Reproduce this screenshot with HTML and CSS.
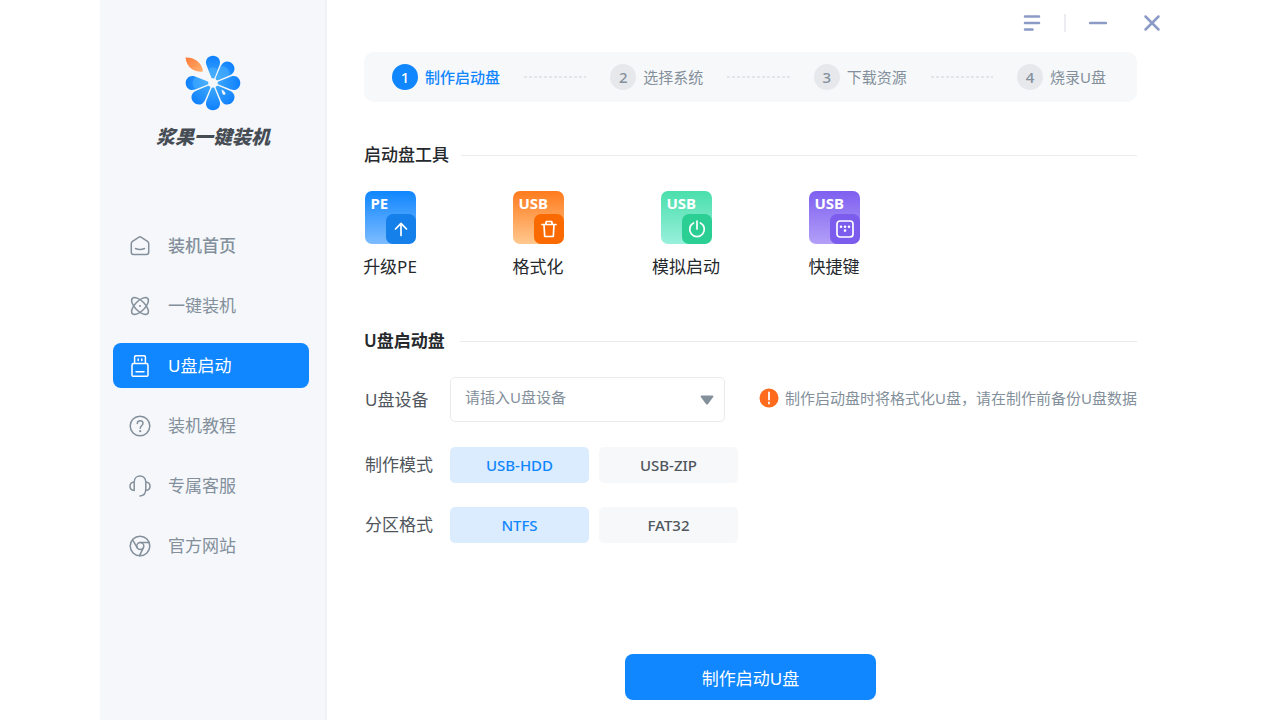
FILE: index.html
```html
<!DOCTYPE html>
<html lang="zh-CN">
<head>
<meta charset="utf-8">
<meta name="viewport" content="width=device-width, initial-scale=1">
<title>浆果一键装机</title>
<link rel="stylesheet" href="styles.css">
</head>
<body>
<div class="window">
  <aside class="sidebar">
    <div class="brand">
      <svg class="brand-logo" viewBox="-28 -28 56 56" aria-hidden="true">
        <defs>
          <linearGradient id="petal-fill" x1="0" y1="0" x2="0" y2="1">
            <stop offset="0" stop-color="#0f80ff"/><stop offset="1" stop-color="#3ba6fb"/>
          </linearGradient>
          <linearGradient id="leaf-fill" x1="0" y1="0" x2="1" y2="1">
            <stop offset="0" stop-color="#ff7a38"/><stop offset="1" stop-color="#ffb070"/>
          </linearGradient>
          <path id="petal" d="M-1.600 -5.500L-6.600 -18C-8.400 -23.500 -4.500 -27.300 0 -27.300S8.400 -23.500 6.600 -18L1.600 -5.500C1.200 -4.300 -1.200 -4.300 -1.600 -5.500Z"/>
        </defs>
        <g fill="url(#petal-fill)">
          <use href="#petal"/>
          <use href="#petal" transform="rotate(45)"/>
          <use href="#petal" transform="rotate(90)"/>
          <use href="#petal" transform="rotate(135)"/>
          <use href="#petal" transform="rotate(180)"/>
          <use href="#petal" transform="rotate(225)"/>
          <use href="#petal" transform="rotate(270)"/>
        </g>
        <g fill="#5cc0ff" opacity=".4">
          <path d="M-1.600 -5.500L-4.600 -13C-4 -16.500 4 -16.500 4.600 -13L1.600 -5.500Z"/>
          <path transform="rotate(45)" d="M-1.600 -5.500L-6 -17C-4 -21.500 4 -21.500 6 -17L1.600 -5.500Z"/>
          <path transform="rotate(270)" d="M-1.600 -5.500L-6 -17C-4 -21.500 4 -21.500 6 -17L1.600 -5.500Z"/>
          <path transform="rotate(270)" d="M-1.600 -5.500L-4.200 -12C-4 -15.500 4 -15.500 4.200 -12L1.600 -5.500Z"/>
        </g>
        <path d="M8.500 6.500Q12.500 8.500 12.500 11Q11.500 12.500 9.800 11.300Q8.800 10 8.500 6.500Z" fill="#f5f7fb"/>
        <path d="M-27.500 -25.500C-20 -26 -11 -21.500 -10 -11.500C-18 -10.500 -26.500 -15 -27.500 -25.500Z" fill="url(#leaf-fill)"/>
      </svg>
      <h1 class="brand-name">浆果一键装机</h1>
    </div>
    <nav class="nav" aria-label="主导航">
      <a class="nav-item nav-item-strong" href="#home">
        <svg class="nav-icon" viewBox="0 0 22 22"><path d="M2.300 8.600Q2.300 7.200 3.500 6.400L9.600 2.300Q11 1.400 12.400 2.300L18.500 6.400Q19.700 7.200 19.700 8.600V17.200Q19.700 19.400 17.500 19.400H4.500Q2.300 19.400 2.300 17.200ZM6.500 13.500Q11 15.600 15.500 13.500"/></svg>
        <span>装机首页</span>
      </a>
      <a class="nav-item" href="#install">
        <svg class="nav-icon" viewBox="0 0 22 22"><ellipse cx="11" cy="11" rx="10.800" ry="5" transform="rotate(45 11 11)"/><ellipse cx="11" cy="11" rx="10.800" ry="5" transform="rotate(-45 11 11)"/><circle class="nav-icon-dot" cx="11" cy="11" r="1"/></svg>
        <span>一键装机</span>
      </a>
      <a class="nav-item nav-item-active" href="#usb" aria-current="page">
        <svg class="nav-icon" viewBox="0 0 22 22"><path d="M5.600 8.500V2Q5.600 .7 6.900 .7H15.100Q16.400 .7 16.400 2V8.500M4.700 8.500H17.300Q19 8.500 19 10.200V20Q19 21.300 17.700 21.300H4.300Q3 21.300 3 20V10.200Q3 8.500 4.700 8.500ZM7 16.800H15M9.200 4V5.500M12.800 4V5.500"/></svg>
        <span>U盘启动</span>
      </a>
      <a class="nav-item" href="#guide">
        <svg class="nav-icon" viewBox="0 0 22 22"><circle cx="11" cy="11" r="9.800"/><path d="M8.300 8.500C8.300 4.800 14 4.900 14 8.300C14 10.700 11.200 10.700 11.200 13.200"/><circle class="nav-icon-dot" cx="11.200" cy="16.200" r="1.100"/></svg>
        <span>装机教程</span>
      </a>
      <a class="nav-item" href="#service">
        <svg class="nav-icon" viewBox="0 0 22 22"><path d="M5.200 15.500V7C5.200 -.9 16.800 -.9 16.800 7V14Q16.800 20.600 11 21M5.200 7Q1 7.500 1 11.200T5.200 15.500M16.800 7Q21 7.500 21 11.200T16.800 15.500"/></svg>
        <span>专属客服</span>
      </a>
      <a class="nav-item" href="#website">
        <svg class="nav-icon" viewBox="0 0 22 22"><circle cx="11" cy="11" r="9.800"/><circle cx="11.300" cy="11" r="3.500"/><path d="M11.300 7.500H20M3.600 4.800L8.300 12.800M14.300 12.800L10.500 20.700"/></svg>
        <span>官方网站</span>
      </a>
    </nav>
  </aside>

  <main class="main">
    <div class="titlebar">
      <button class="icon-button" type="button" aria-label="菜单"><svg width="18" height="18" viewBox="0 0 18 18"><path d="M2 2.500H16M2 9H16M2 15.500H9.500"/></svg></button>
      <span class="titlebar-divider"></span>
      <button class="icon-button" type="button" aria-label="最小化"><svg width="18" height="18" viewBox="0 0 18 18"><path d="M1 9H17"/></svg></button>
      <button class="icon-button icon-button-close" type="button" aria-label="关闭"><svg width="18" height="18" viewBox="0 0 18 18"><path d="M2.500 2.500L15.500 15.500M15.500 2.500L2.500 15.500"/></svg></button>
    </div>

    <ol class="steps">
      <li class="step step-active" aria-current="step"><span class="step-number">1</span><span>制作启动盘</span></li>
      <li class="step-line" aria-hidden="true"></li>
      <li class="step"><span class="step-number">2</span><span>选择系统</span></li>
      <li class="step-line" aria-hidden="true"></li>
      <li class="step"><span class="step-number">3</span><span>下载资源</span></li>
      <li class="step-line" aria-hidden="true"></li>
      <li class="step"><span class="step-number">4</span><span>烧录U盘</span></li>
    </ol>

    <section class="tools-section">
      <h2 class="section-title">启动盘工具</h2>
      <div class="tools">
        <button class="tool" type="button">
          <span class="tool-tile tool-blue"><span class="tool-tag">PE</span><span class="tool-badge"><svg viewBox="0 0 20 20"><path d="M10 16.500V4.500M4.500 10L10 4.300L15.500 10"/></svg></span></span>
          <span class="tool-label">升级PE</span>
        </button>
        <button class="tool" type="button">
          <span class="tool-tile tool-orange"><span class="tool-tag">USB</span><span class="tool-badge"><svg viewBox="0 0 20 20"><path d="M3 5.500H17M6.700 5.500L7.300 2.500H12.700L13.300 5.500M5 5.500L5.700 17.500H14.300L15 5.500"/></svg></span></span>
          <span class="tool-label">格式化</span>
        </button>
        <button class="tool" type="button">
          <span class="tool-tile tool-green"><span class="tool-tag">USB</span><span class="tool-badge"><svg viewBox="0 0 20 20"><path d="M10 2V10M6.500 4A7.300 7.300 0 1 0 13.500 4"/></svg></span></span>
          <span class="tool-label">模拟启动</span>
        </button>
        <button class="tool" type="button">
          <span class="tool-tile tool-purple"><span class="tool-tag">USB</span><span class="tool-badge"><svg viewBox="0 0 20 20"><rect x="2" y="2" width="16" height="16" rx="3"/><g fill="#fff" stroke="none"><circle cx="6" cy="7.800" r="1.300"/><circle cx="10" cy="7.800" r="1.300"/><circle cx="14" cy="7.800" r="1.300"/><circle cx="10" cy="11.600" r="1.300"/></g></svg></span></span>
          <span class="tool-label">快捷键</span>
        </button>
      </div>
    </section>

    <form class="usb-form">
      <h2 class="section-title section-title-wide">U盘启动盘</h2>
      <div class="field field-device">
        <label class="field-label" for="device">U盘设备</label>
        <div class="select-wrap">
          <select class="select" id="device" name="device"><option>请插入U盘设备</option></select>
          <svg class="select-arrow" viewBox="0 0 14 10" aria-hidden="true"><path d="M1.500 .5H12.500Q14 .7 13.200 2L8 9Q7 10 6 9L.8 2Q0 .7 1.500 .5Z"/></svg>
        </div>
        <p class="notice">
          <svg class="notice-icon" viewBox="0 0 20 20" aria-hidden="true"><circle cx="10" cy="10" r="9.500" fill="#ff6b1c"/><path d="M10 4.500V11.500M10 14.300V15.500" stroke="#fff" stroke-width="1.800" stroke-linecap="round"/></svg>
          <span>制作启动盘时将格式化U盘，请在制作前备份U盘数据</span>
        </p>
      </div>
      <div class="field field-mode" role="radiogroup" aria-labelledby="mode-label">
        <span class="field-label" id="mode-label">制作模式</span>
        <div class="options">
          <label class="option"><input type="radio" name="mode" checked><span>USB-HDD</span></label>
          <label class="option"><input type="radio" name="mode"><span>USB-ZIP</span></label>
        </div>
      </div>
      <div class="field" role="radiogroup" aria-labelledby="format-label">
        <span class="field-label" id="format-label">分区格式</span>
        <div class="options">
          <label class="option"><input type="radio" name="format" checked><span>NTFS</span></label>
          <label class="option"><input type="radio" name="format"><span>FAT32</span></label>
        </div>
      </div>
      <button class="primary" type="button">制作启动U盘</button>
    </form>
  </main>
</div>
</body>
</html>
```
FILE: styles.css
```css
* { box-sizing: border-box; }

body {
  margin: 0;
  background: #fff;
  color: #25282c;
  font-family: "Noto Sans", "Noto Sans CJK SC", sans-serif;
  font-size: 15px;
}

button, select { font: inherit; }
button { padding: 0; border: 0; background: none; cursor: pointer; }

.window {
  display: flex;
  max-width: 1080px;
  min-height: 100vh;
  margin: 0 auto;
}

/* Sidebar */
.sidebar {
  flex: none;
  width: 227px;
  padding: 55px 16px 24px 13px;
  background: #f5f7fb;
  border-right: 2px solid #f0f2f7;
}

.brand { display: flex; flex-direction: column; align-items: center; padding-left: 4px; }
.brand-logo { width: 56px; height: 56px; }
.brand-name {
  margin: 11px 0 0;
  color: #464c53;
  font-size: 19px;
  font-style: italic;
  font-weight: 900;
  line-height: 30px;
  white-space: nowrap;
}

.nav { display: flex; flex-direction: column; gap: 15px; margin-top: 71px; }
.nav-item {
  display: flex;
  align-items: center;
  gap: 17px;
  height: 45px;
  padding-left: 16px;
  border-radius: 8px;
  color: #83909b;
  font-size: 17px;
  line-height: 24px;
  text-decoration: none;
}
.nav-item-strong { font-weight: 500; }
.nav-item-active { background: #1086ff; color: #fff; }
.nav-icon {
  width: 22px;
  height: 22px;
  fill: none;
  stroke: currentColor;
  stroke-width: 1.5;
  stroke-linecap: round;
  stroke-linejoin: round;
}
.nav-icon-dot { fill: currentColor; stroke: none; }

/* Main column */
.main { flex: 1; min-width: 0; padding: 0 43px 20px 37px; }

.titlebar {
  display: flex;
  align-items: center;
  justify-content: flex-end;
  gap: 23px;
  height: 46px;
  margin: 0 -24px 6px 0;
}
.icon-button { display: flex; }
.icon-button-close { margin-left: 13px; }
.icon-button svg { fill: none; stroke: #8b9bc5; stroke-width: 2.5; stroke-linecap: round; }
.titlebar-divider { width: 2px; height: 18px; background: #ebedf3; }

.steps {
  display: flex;
  align-items: center;
  height: 50px;
  margin: 0;
  padding: 0 31px 0 28px;
  border-radius: 10px;
  background: #f7f8fa;
  list-style: none;
}
.step { display: flex; align-items: center; gap: 7px; color: #83909b; line-height: 22px; white-space: nowrap; }
.step-number {
  width: 26px;
  height: 26px;
  border-radius: 50%;
  background: #e6e8ec;
  font-weight: 500;
  line-height: 26px;
  text-align: center;
}
.step-active { color: #1086ff; font-weight: 500; }
.step-active .step-number { background: #1086ff; color: #fff; }
.step-line {
  flex: 1;
  height: 2px;
  margin: 0 24px;
  background: repeating-linear-gradient(90deg, #e3e5e9 0 3px, transparent 3px 5px);
}

.section-title {
  display: flex;
  align-items: center;
  gap: 12px;
  margin: 0;
  font-size: 17px;
  font-weight: 500;
  line-height: 24px;
}
.section-title::after { content: ""; flex: 1; height: 1px; background: #e9ebed; }
.section-title-wide { gap: 15px; font-weight: 600; }

/* Tools */
.tools-section { margin-top: 41px; }
.tools { display: flex; gap: 48px; margin: 24px 0 0 -24px; }
.tool { display: flex; flex-direction: column; align-items: center; gap: 11px; width: 100px; color: inherit; }
.tool-tile {
  position: relative;
  width: 51px;
  height: 53px;
  padding: 2px 6px;
  border-radius: 7px;
  overflow: hidden;
  color: #fff;
  text-align: left;
}
.tool-tag { display: block; font-size: 15px; font-weight: 700; line-height: 20px; }
.tool-badge {
  position: absolute;
  right: 0;
  bottom: 0;
  display: flex;
  align-items: center;
  justify-content: center;
  width: 30px;
  height: 30px;
  border-radius: 7px;
}
.tool-badge svg {
  width: 20px;
  height: 20px;
  fill: none;
  stroke: #fff;
  stroke-width: 1.7;
  stroke-linecap: round;
  stroke-linejoin: round;
}
.tool-label { font-size: 17px; line-height: 24px; }
.tool-blue { background: linear-gradient(#1086ff, #7dbcff); }
.tool-blue .tool-badge { background: #157fea; }
.tool-orange { background: linear-gradient(#ff7b1c, #ffc88f); }
.tool-orange .tool-badge { background: #fb6a00; }
.tool-green { background: linear-gradient(#49dfab, #99f0dc); }
.tool-green .tool-badge { background: #2bcf94; }
.tool-purple { background: linear-gradient(#7e5ff0, #b3a0f8); }
.tool-purple .tool-badge { background: #7b5cec; }

/* Form */
.usb-form { margin-top: 50px; }
.field { display: flex; align-items: center; margin-top: 24px; }
.field-mode { margin-top: 25px; }
.field-label { flex: none; width: 86px; padding-left: 1px; color: #50565d; font-size: 17px; line-height: 24px; }
.select-wrap { position: relative; flex: 0 1 275px; }
.select {
  width: 100%;
  height: 45px;
  padding: 0 36px 6px 14px;
  border: 1px solid #e9ebed;
  border-radius: 5px;
  appearance: none;
  background: #fff;
  color: #83909b;
  font-size: 15px;
}
.select-arrow { position: absolute; top: 18px; right: 11px; width: 14px; height: 10px; fill: #83909b; pointer-events: none; }
.notice { display: flex; align-items: center; gap: 6px; margin: 0 0 0 auto; padding-bottom: 4px; color: #83909b; font-size: 15px; line-height: 22px; white-space: nowrap; }
.notice-icon { width: 20px; height: 20px; }

.options { display: flex; gap: 10px; }
.option { position: relative; width: 139px; cursor: pointer; }
.option input { position: absolute; inset: 0; margin: 0; opacity: 0; }
.option span {
  display: block;
  border-radius: 5px;
  background: #f7f8fa;
  color: #50565d;
  font-weight: 500;
  line-height: 36px;
  text-align: center;
}
.option input:checked + span { background: #dbecff; color: #1086ff; }

.primary {
  display: block;
  width: 251px;
  height: 46px;
  margin: 111px auto 0;
  border-radius: 8px;
  background: #1086ff;
  color: #fff;
  font-size: 17px;
}
```
